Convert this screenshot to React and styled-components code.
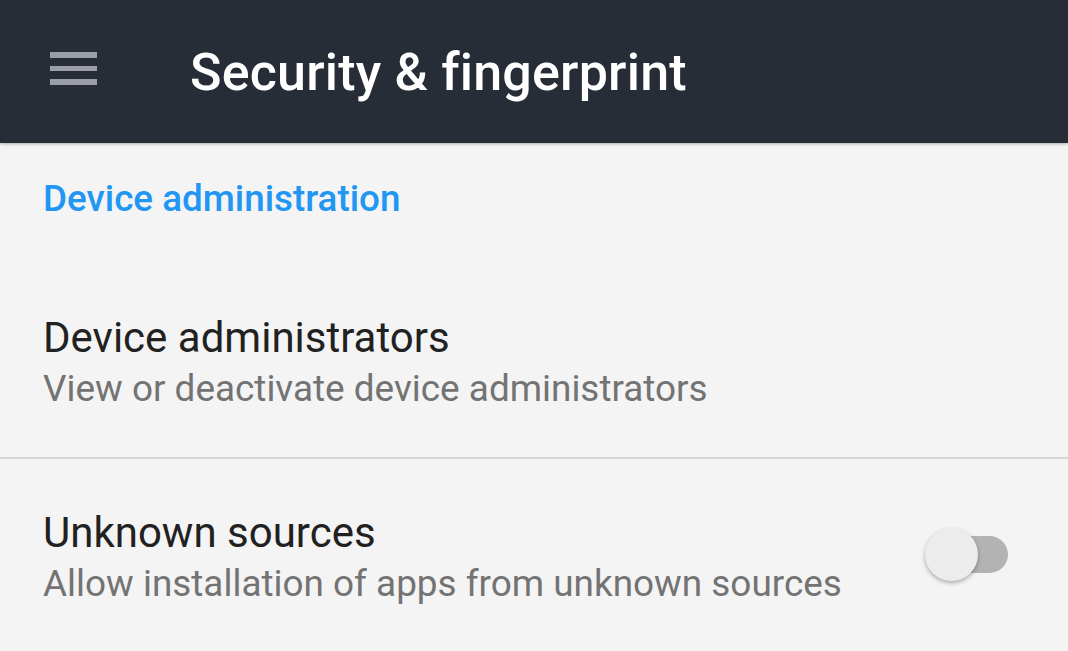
import React from "react";
import styled, { createGlobalStyle } from "styled-components";

const Global = createGlobalStyle`
  html, body {
    margin: 0;
    padding: 0;
    background: #f4f4f4;
    font-family: Roboto, "Noto Sans", Arial, sans-serif;
  }
`;

const Screen = styled.div`
  width: 1068px;
  height: 651px;
  overflow: hidden;
  background: #f4f4f4;
`;

const AppBar = styled.header`
  height: 143px;
  background: #262d37;
  display: flex;
  align-items: center;
  box-shadow: 0 1px 3px rgba(0, 0, 0, 0.3);
  position: relative;
`;

const MenuButton = styled.div`
  width: 47px;
  margin-left: 50px;
  margin-right: 93px;
  margin-top: -6px;
  display: flex;
  flex-direction: column;
  gap: 8.3px;
  span {
    display: block;
    height: 5.3px;
    background: #9b9fa5;
  }
`;

const Title = styled.h1`
  margin: 0;
  margin-top: 2px;
  color: #ffffff;
  font-size: 52px;
  font-weight: 500;
  letter-spacing: 0.2px;
`;

const SectionHeader = styled.div`
  padding: 34px 43px 0;
  height: 121px;
  box-sizing: border-box;
  color: #2196f3;
  font-size: 36.8px;
  font-weight: 500;
`;

const Item = styled.div`
  display: flex;
  align-items: flex-start;
  padding: 47.5px 43px 0;
  height: ${(p) => p.h}px;
  box-sizing: border-box;
  border-bottom: ${(p) => (p.divider ? "2px solid #d7d7d7" : "none")};
`;

const Texts = styled.div`
  flex: 1;
  display: flex;
  flex-direction: column;
`;

const Primary = styled.div`
  color: #212121;
  font-size: 42px;
  line-height: 51px;
`;

const Secondary = styled.div`
  color: #737373;
  font-size: 36.9px;
  line-height: 52px;
`;

const Switch = styled.div`
  position: relative;
  width: 83px;
  height: 53px;
  margin-right: 17px;
  margin-top: 21px;
  &::before {
    content: "";
    position: absolute;
    left: 10px;
    right: 0;
    top: 8.5px;
    height: 37px;
    border-radius: 19px;
    background: #b3b3b3;
  }
  &::after {
    content: "";
    position: absolute;
    left: 0;
    top: 0;
    width: 53px;
    height: 53px;
    border-radius: 50%;
    background: #ececec;
    box-shadow: 0 2px 4px rgba(0, 0, 0, 0.3);
  }
`;

export default function App() {
  return (
    <Screen>
      <Global />
      <AppBar>
        <MenuButton>
          <span />
          <span />
          <span />
        </MenuButton>
        <Title>Security &amp; fingerprint</Title>
      </AppBar>
      <SectionHeader>Device administration</SectionHeader>
      <Item h={195} divider>
        <Texts>
          <Primary>Device administrators</Primary>
          <Secondary>View or deactivate device administrators</Secondary>
        </Texts>
      </Item>
      <Item h={192}>
        <Texts>
          <Primary>Unknown sources</Primary>
          <Secondary>Allow installation of apps from unknown sources</Secondary>
        </Texts>
        <Switch />
      </Item>
    </Screen>
  );
}
